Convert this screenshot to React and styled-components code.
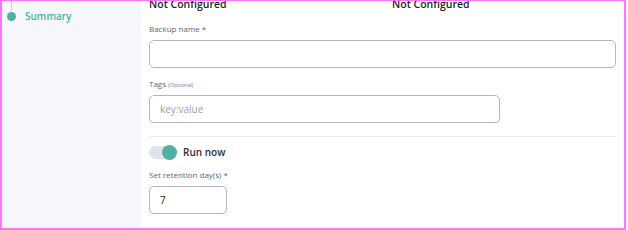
import React from "react";
import styled, { createGlobalStyle } from "styled-components";

const Global = createGlobalStyle`
  html, body { margin: 0; padding: 0; background: #fff; }
  body { font-family: "Open Sans", "Liberation Sans", sans-serif; }
`;

const Frame = styled.div`
  box-sizing: border-box;
  width: 626px;
  height: 230px;
  border: 2px solid #ff73ff;
  border-top-width: 1px;
  display: flex;
  overflow: hidden;
  background: #fff;
`;

const Sidebar = styled.aside`
  width: 139px;
  flex: none;
  background: #f5f7fb;
  position: relative;
`;

const Step = styled.div`
  position: relative;
  display: flex;
  align-items: center;
  gap: 9px;
  padding: 8px 0 0 5px;
  color: #4fb0a4;
  font-size: 10px;
  font-weight: 600;
`;

const StepLine = styled.span`
  position: absolute;
  left: 9px;
  top: -2px;
  width: 1px;
  height: 12px;
  background: #c9ced8;
`;

const Dot = styled.span`
  width: 9px;
  height: 9px;
  border-radius: 50%;
  background: #4fb0a4;
  flex: none;
`;

const Main = styled.main`
  flex: 1;
  padding: 0 7px 0 8px;
  display: flex;
  flex-direction: column;
`;

const StatusRow = styled.div`
  display: grid;
  grid-template-columns: 243px 1fr;
  margin-top: -4px;
  margin-bottom: -2px;
  font-size: 10.5px;
  font-weight: 600;
  color: #1f2329;
  line-height: 14px;
`;

const Label = styled.label`
  display: block;
  font-size: 8px;
  color: #5f6570;
  margin-top: ${(p) => p.$mt || 0}px;
  line-height: 11px;
  height: 11px;
`;

const Small = styled.span`
  font-size: 5.5px;
  line-height: 1;
  color: #7a808a;
`;

const Input = styled.div`
  box-sizing: border-box;
  width: ${(p) => p.$w}px;
  height: 28px;
  margin-top: 6px;
  border: 1px solid #b3b7bd;
  border-radius: 5px;
  display: flex;
  align-items: center;
  padding-left: 10px;
  font-size: 10px;
  color: ${(p) => (p.$placeholder ? "#9aa0a8" : "#2a2e33")};
`;

const Divider = styled.hr`
  border: none;
  border-top: 1px solid #e9ebee;
  margin: 13px 0 0;
  width: 467px;
`;

const ToggleRow = styled.div`
  display: flex;
  align-items: center;
  gap: 7px;
  margin-top: 8px;
  font-size: 10px;
  font-weight: 600;
  color: #2b2f36;
`;

const Track = styled.span`
  position: relative;
  width: 27px;
  height: 13px;
  border-radius: 7px;
  background: #e0e3ea;
  flex: none;
`;

const Knob = styled.span`
  position: absolute;
  right: -1px;
  top: -1px;
  width: 15px;
  height: 15px;
  border-radius: 50%;
  background: #4fb0a4;
`;

export default function App() {
  return (
    <>
      <Global />
      <Frame>
        <Sidebar>
          <Step>
            <StepLine />
            <Dot />
            Summary
          </Step>
        </Sidebar>
        <Main>
          <StatusRow>
            <span>Not Configured</span>
            <span>Not Configured</span>
          </StatusRow>
          <Label $mt={14}>Backup name *</Label>
          <Input $w={467} />
          <Label $mt={10}>
            Tags <Small>(Optional)</Small>
          </Label>
          <Input $w={351} $placeholder>key:value</Input>
          <Divider />
          <ToggleRow>
            <Track>
              <Knob />
            </Track>
            Run now
          </ToggleRow>
          <Label $mt={10}>Set retention day(s) *</Label>
          <Input $w={78}>7</Input>
        </Main>
      </Frame>
    </>
  );
}
